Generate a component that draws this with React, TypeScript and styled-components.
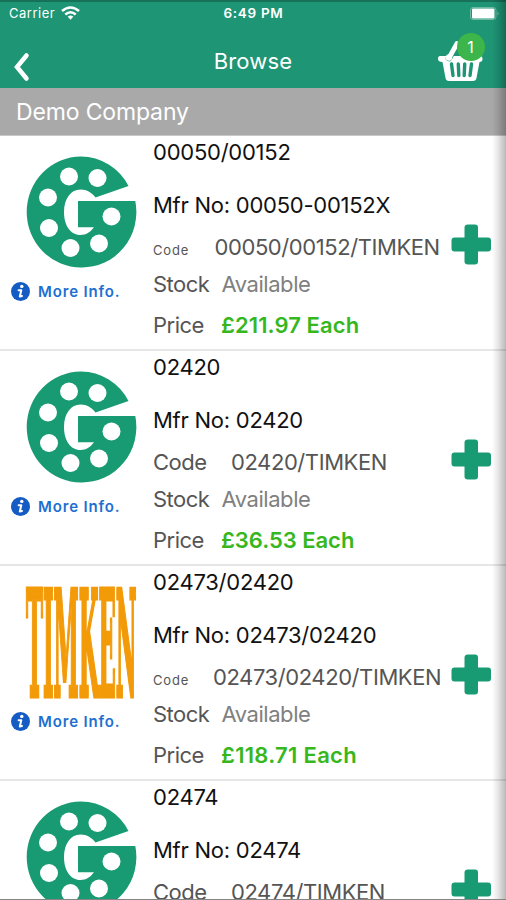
import React from "react";
import styled, { createGlobalStyle } from "styled-components";

const GlobalStyle = createGlobalStyle`
  * { box-sizing: border-box; }
  html, body { margin: 0; padding: 0; background: #fff; }
  body { font-family: Inter, Roboto, "Liberation Sans", sans-serif; overflow: hidden; }
  svg { display: block; }
`;

const Screen = styled.div`
  position: relative;
  width: 506px;
  height: 900px;
  overflow: hidden;
  display: flex;
  flex-direction: column;
  background: #fff;
`;

const EdgeShade = styled.div`
  position: absolute;
  inset: 0 0 0 auto;
  width: 14px;
  background: linear-gradient(to right, rgba(0, 0, 0, 0), rgba(0, 0, 0, 0.1) 45%, rgba(0, 0, 0, 0.28));
  pointer-events: none;
`;

const BottomLine = styled.div`
  position: absolute;
  inset: auto 0 0 0;
  height: 1px;
  background: #858585;
`;

const Header = styled.header`
  height: 88px;
  flex: none;
  background: #1e9575;
  border-top: 2px solid #167158;
  color: #fff;
`;

const StatusBar = styled.div`
  height: 22px;
  display: grid;
  grid-template-columns: 1fr auto 1fr;
  align-items: center;
  padding: 0 6px 0 9px;
`;

const Carrier = styled.div`
  display: flex;
  align-items: center;
  gap: 6px;
  font-size: 13px;
  letter-spacing: 0.5px;
`;

const Clock = styled.div`
  font-size: 13.5px;
  font-weight: 600;
  letter-spacing: 0.7px;
  margin-right: 2px;
`;

const Battery = styled.div`
  justify-self: end;
`;

const NavBar = styled.nav`
  height: 64px;
  display: grid;
  grid-template-columns: 1fr auto 1fr;
  align-items: center;
  padding: 0 20px 0 13px;
`;

const BackButton = styled.button`
  border: 0;
  padding: 22px 0 0;
  background: none;
  justify-self: start;
`;

const Title = styled.h1`
  margin: 10px 0 0 7px;
  font-size: 22px;
  font-weight: 400;
  letter-spacing: 0.2px;
`;

const BasketButton = styled.button`
  position: relative;
  justify-self: end;
  border: 0;
  padding: 0;
  width: 48px;
  height: 52px;
  background: none;
`;

const Badge = styled.span`
  position: absolute;
  top: 3px;
  right: 1.5px;
  width: 28px;
  height: 28px;
  border-radius: 50%;
  background: #3cb54a;
  color: #fff;
  font: 400 16px/28px Inter, sans-serif;
  text-align: center;
`;

const CompanyBar = styled.div`
  height: 47px;
  flex: none;
  padding: 0 16px;
  background: #a9a9a9;
  color: #fff;
  font-size: 23px;
  line-height: 49px;
  letter-spacing: -0.15px;
`;

const List = styled.main`
  flex: 1;
  min-height: 0;
  overflow: hidden;
  border-top: 1px solid #c9c9c9;
`;

const Row = styled.article`
  height: 215px;
  display: grid;
  grid-template-columns: 153px 1fr 55px;
  border-bottom: 2px solid #e6e6e6;
`;

const Media = styled.div`
  padding: 19px 0 0 11px;
`;

const Logo = styled.div`
  width: 112px;
  height: 114px;
  margin-left: 14px;
`;

const MoreInfo = styled.a`
  display: flex;
  align-items: center;
  gap: 8px;
  margin-top: 12px;
  height: 20px;
  color: #1e6fd0;
  font-size: 15px;
  font-weight: 600;
  letter-spacing: 0.85px;
`;

const Details = styled.div`
  display: grid;
  grid-template-rows: 53px 42px 37px 41px 32px;
  white-space: nowrap;
`;

const Heading = styled.div`
  font-size: 22px;
  line-height: 32px;
  letter-spacing: -0.25px;
  color: #111;
`;

const Field = styled.div`
  display: flex;
  align-items: baseline;
  font-size: 22px;
  line-height: 32px;
  color: #555;
`;

const Label = styled.span<{ $width: number; $small?: boolean }>`
  flex: none;
  width: ${(p) => p.$width}px;
  font-size: ${(p) => (p.$small ? 13 : 22)}px;
  letter-spacing: ${(p) => (p.$small ? 0.8 : -0.5)}px;
`;

const Code = styled.span`
  letter-spacing: -0.42px;
`;

const Stock = styled.span`
  color: #808080;
  letter-spacing: -0.45px;
`;

const Price = styled.span<{ $tracking: number }>`
  color: #37b71e;
  font-weight: 600;
  letter-spacing: ${(p) => p.$tracking}px;
`;

const AddButton = styled.button`
  border: 0;
  padding: 87.5px 0 0;
  background: none;
  align-self: start;
  justify-self: start;
`;

const GearLogo = () => (
  <svg width="112" height="114" viewBox="0 0 112 114">
    <path
      d="M103.500 31A54.300 55.500 0 0 0 56 1.500A54.300 55.500 0 0 0 1.700 57A54.300 55.500 0 0 0 56 112.500A54.300 55.500 0 0 0 110.300 46H53V72.300H69C65 77.500 61 80 55.500 80C45.500 80 39 70.500 39 57C39 43.500 46 34.500 55.500 34.500C62 34.500 67 38 70.500 42.500Z"
      fill="#189b72"
    />
    <g fill="#fff">
      <circle cx="44" cy="21.500" r="9" />
      <circle cx="72.500" cy="23" r="9" />
      <circle cx="23" cy="42.500" r="9" />
      <circle cx="24" cy="73" r="9" />
      <circle cx="45.500" cy="93" r="9" />
      <circle cx="74" cy="88.500" r="9" />
      <circle cx="86.500" cy="61.500" r="9" />
    </g>
  </svg>
);

const TimkenLogo = () => (
  <svg width="113" height="114" viewBox="0 0 113 114">
    <g transform="translate(1 110.500) scale(1 2)">
      <text
        fontFamily="'DejaVu Serif', serif"
        fontWeight="700"
        fontSize="73"
        textLength="110.500"
        lengthAdjust="spacingAndGlyphs"
        fill="#f39a08"
        stroke="#f39a08"
        strokeWidth="2.600"
      >
        TIMKEN
      </text>
    </g>
  </svg>
);

const InfoIcon = () => (
  <svg width="19" height="19" viewBox="0 0 19 19">
    <circle cx="9.500" cy="9.500" r="9.500" fill="#145cc4" />
    <circle cx="10.800" cy="4.400" r="1.700" fill="#fff" />
    <path d="M7.600 8.200H10.300L8.800 14.500L11 14" fill="none" stroke="#fff" strokeWidth="2" strokeLinecap="round" strokeLinejoin="round" />
  </svg>
);

const PlusIcon = () => (
  <svg width="40" height="41" viewBox="0 0 40 41">
    <path
      d="M17 .5H24Q27 .5 27 3.500V13.500H37Q40 13.500 40 16.500V24.500Q40 27.500 37 27.500H27V37.500Q27 40.500 24 40.500H17Q13.500 40.500 13.500 37.500V27.500H3.500Q.5 27.500 .5 24.500V16.500Q.5 13.500 3.500 13.500H13.500V3.500Q13.500 .5 17 .5Z"
      fill="#189b72"
    />
  </svg>
);

const BasketIcon = () => (
  <svg width="48" height="52" viewBox="0 0 48 52">
    <path d="M2 26H42Q44.500 26 44.500 29Q44.500 32 41.500 32L38.500 48Q38 51 35 51H11Q8 51 7.500 48L4.500 32Q0 32 0 29Q0 26 2 26Z" fill="#fff" />
    <path d="M13.500 34L15 45.500M20.300 34L20.800 45.500M26.700 34L26.200 45.500M33.500 34L32 45.500" stroke="#1e9575" strokeWidth="3.400" strokeLinecap="round" />
    <path d="M19 13.500L11 28" stroke="#1e9575" strokeWidth="6.500" strokeLinecap="round" />
    <path d="M19 13.500L11 28" stroke="#fff" strokeWidth="4.800" strokeLinecap="round" />
    <circle cx="11" cy="27.500" r="3.200" fill="#fff" />
  </svg>
);

const WifiIcon = () => (
  <svg width="19" height="14" viewBox="0 0 19 14">
    <g fill="none" stroke="#fff" strokeWidth="2.600">
      <path d="M1 5Q9.500 -2 18 5" />
      <path d="M4.300 8.500Q9.500 4 14.700 8.500" />
    </g>
    <path d="M6.700 10.800Q9.500 8.200 12.300 10.800L9.500 13.700Z" fill="#fff" />
  </svg>
);

const BatteryIcon = () => (
  <svg width="30" height="13" viewBox="0 0 30 13">
    <rect x=".5" y=".5" width="25.500" height="12" rx="2.500" fill="none" stroke="#6dbaa4" />
    <rect x="2" y="1.500" width="22.500" height="10" rx="1" fill="#fff" />
    <path d="M27.500 4.500Q29.500 6.500 27.500 8.500Z" fill="#8ccbb9" />
  </svg>
);

interface Product {
  name: string;
  mfr: string;
  code: string;
  price: string;
  tracking: number;
  brand: "gear" | "timken";
  codeOffset: number;
  compact?: boolean;
}

const products: Product[] = [
  { name: "00050/00152", mfr: "00050-00152X", code: "00050/00152/TIMKEN", price: "£211.97 Each", tracking: 0.1, brand: "gear", codeOffset: 61.5, compact: true },
  { name: "02420", mfr: "02420", code: "02420/TIMKEN", price: "£36.53 Each", tracking: -0.03, brand: "gear", codeOffset: 78 },
  { name: "02473/02420", mfr: "02473/02420", code: "02473/02420/TIMKEN", price: "£118.71 Each", tracking: 0.3, brand: "timken", codeOffset: 60, compact: true },
  { name: "02474", mfr: "02474", code: "02474/TIMKEN", price: "£36.53 Each", tracking: 0, brand: "gear", codeOffset: 78 },
];

const ProductRow = ({ product }: { product: Product }) => (
  <Row>
    <Media>
      <Logo>{product.brand === "gear" ? <GearLogo /> : <TimkenLogo />}</Logo>
      <MoreInfo>
        <InfoIcon />
        More Info.
      </MoreInfo>
    </Media>
    <Details>
      <Heading>{product.name}</Heading>
      <Heading>Mfr No: {product.mfr}</Heading>
      <Field>
        <Label $width={product.codeOffset} $small={product.compact}>Code</Label>
        <Code>{product.code}</Code>
      </Field>
      <Field>
        <Label $width={68.5}>Stock</Label>
        <Stock>Available</Stock>
      </Field>
      <Field>
        <Label $width={68}>Price</Label>
        <Price $tracking={product.tracking}>{product.price}</Price>
      </Field>
    </Details>
    <AddButton aria-label="Add to basket">
      <PlusIcon />
    </AddButton>
  </Row>
);

export default function App() {
  return (
    <>
      <GlobalStyle />
      <Screen>
        <Header>
          <StatusBar>
            <Carrier>
              Carrier
              <WifiIcon />
            </Carrier>
            <Clock>6:49 PM</Clock>
            <Battery>
              <BatteryIcon />
            </Battery>
          </StatusBar>
          <NavBar>
            <BackButton aria-label="Back">
              <svg width="17" height="30" viewBox="0 0 17 30">
                <path d="M13.500 3.500L4 15L13.500 26.500" fill="none" stroke="#fff" strokeWidth="4.500" strokeLinecap="round" />
              </svg>
            </BackButton>
            <Title>Browse</Title>
            <BasketButton aria-label="Basket">
              <BasketIcon />
              <Badge>1</Badge>
            </BasketButton>
          </NavBar>
        </Header>
        <CompanyBar>Demo Company</CompanyBar>
        <List>
          {products.map((product) => (
            <ProductRow key={product.name} product={product} />
          ))}
        </List>
        <EdgeShade />
        <BottomLine />
      </Screen>
    </>
  );
}
